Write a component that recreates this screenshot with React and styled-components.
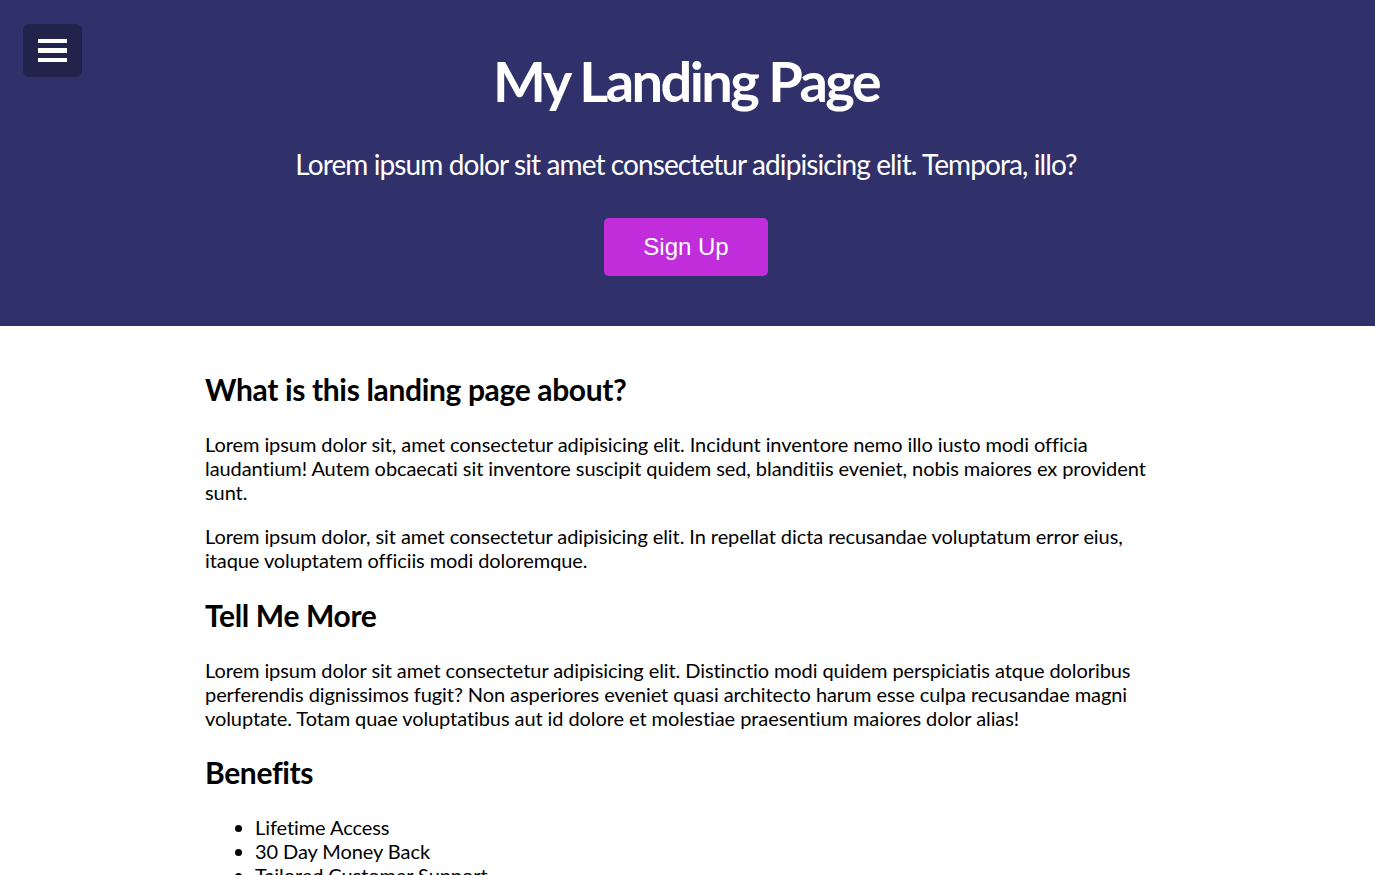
import React from 'react';
import styled, { createGlobalStyle } from 'styled-components';

const GlobalStyle = createGlobalStyle`
  * {
    box-sizing: border-box;
  }

  body {
    margin: 0;
    font-family: Lato, "Open Sans", sans-serif;
    font-size: 20px;
    color: #000;
    background: #fff;
  }
`

const Header = styled.header`
  position: relative;
  background: #30316a;
  color: #fff;
  text-align: center;
  height: 326px;
  padding: 47px 3px 0 0;
`

const MenuButton = styled.button`
  position: absolute;
  top: 24px;
  left: 23px;
  width: 59px;
  height: 53px;
  border: none;
  border-radius: 6px;
  background: #22234b;
  display: flex;
  flex-direction: column;
  align-items: center;
  justify-content: center;
  gap: 5px;
  padding: 0;
  cursor: pointer;
`

const Bar = styled.span`
  display: block;
  width: 29px;
  height: 4.5px;
  background: #fff;
`

const Title = styled.h1`
  font-size: 56px;
  font-weight: 700;
  letter-spacing: -2.6px;
  margin: 0;
  line-height: 1.2;
`

const Subtitle = styled.p`
  font-size: 28px;
  letter-spacing: -0.9px;
  margin: 34px 0 0;
  line-height: 1.2;
`

const SignUpButton = styled.button`
  margin-top: 36px;
  width: 164px;
  height: 58px;
  border: none;
  border-radius: 5px;
  background: #c12cdb;
  color: #fff;
  font-family: "Liberation Sans", Arial, sans-serif;
  font-size: 24px;
  cursor: pointer;
`

const Main = styled.main`
  width: 965px;
  margin: 0 auto;
  padding-top: 20px;
`

const Heading = styled.h2`
  font-size: 30px;
  font-weight: 700;
  letter-spacing: -0.35px;
  margin: 0.83em 0;
  line-height: 1.2;
`

const Paragraph = styled.p`
  margin: 20px 0;
  letter-spacing: -0.08px;
  line-height: 1.2;
`

const List = styled.ul`
  margin: 20px 0;
  padding-left: 50px;
  letter-spacing: -0.08px;
  line-height: 1.2;
`

export default function App(){
  return (
    <>
      <GlobalStyle />
      <Header>
        <MenuButton aria-label='menu'>
          <Bar />
          <Bar />
          <Bar />
        </MenuButton>
        <Title>My Landing Page</Title>
        <Subtitle>Lorem ipsum dolor sit amet consectetur adipisicing elit. Tempora, illo?</Subtitle>
        <SignUpButton>Sign Up</SignUpButton>
      </Header>
      <Main>
        <Heading>What is this landing page about?</Heading>
        <Paragraph>
          Lorem ipsum dolor sit, amet consectetur adipisicing elit. Incidunt inventore nemo illo iusto modi officia laudantium! Autem obcaecati sit inventore suscipit quidem sed, blanditiis eveniet, nobis maiores ex provident sunt.
        </Paragraph>
        <Paragraph>
          Lorem ipsum dolor, sit amet consectetur adipisicing elit. In repellat dicta recusandae voluptatum error eius, itaque voluptatem officiis modi doloremque.
        </Paragraph>
        <Heading>Tell Me More</Heading>
        <Paragraph>
          Lorem ipsum dolor sit amet consectetur adipisicing elit. Distinctio modi quidem perspiciatis atque doloribus perferendis dignissimos fugit? Non asperiores eveniet quasi architecto harum esse culpa recusandae magni voluptate. Totam quae voluptatibus aut id dolore et molestiae praesentium maiores dolor alias!
        </Paragraph>
        <Heading>Benefits</Heading>
        <List>
          <li>Lifetime Access</li>
          <li>30 Day Money Back</li>
          <li>Tailored Customer Support</li>
        </List>
      </Main>
    </>
  )
}
